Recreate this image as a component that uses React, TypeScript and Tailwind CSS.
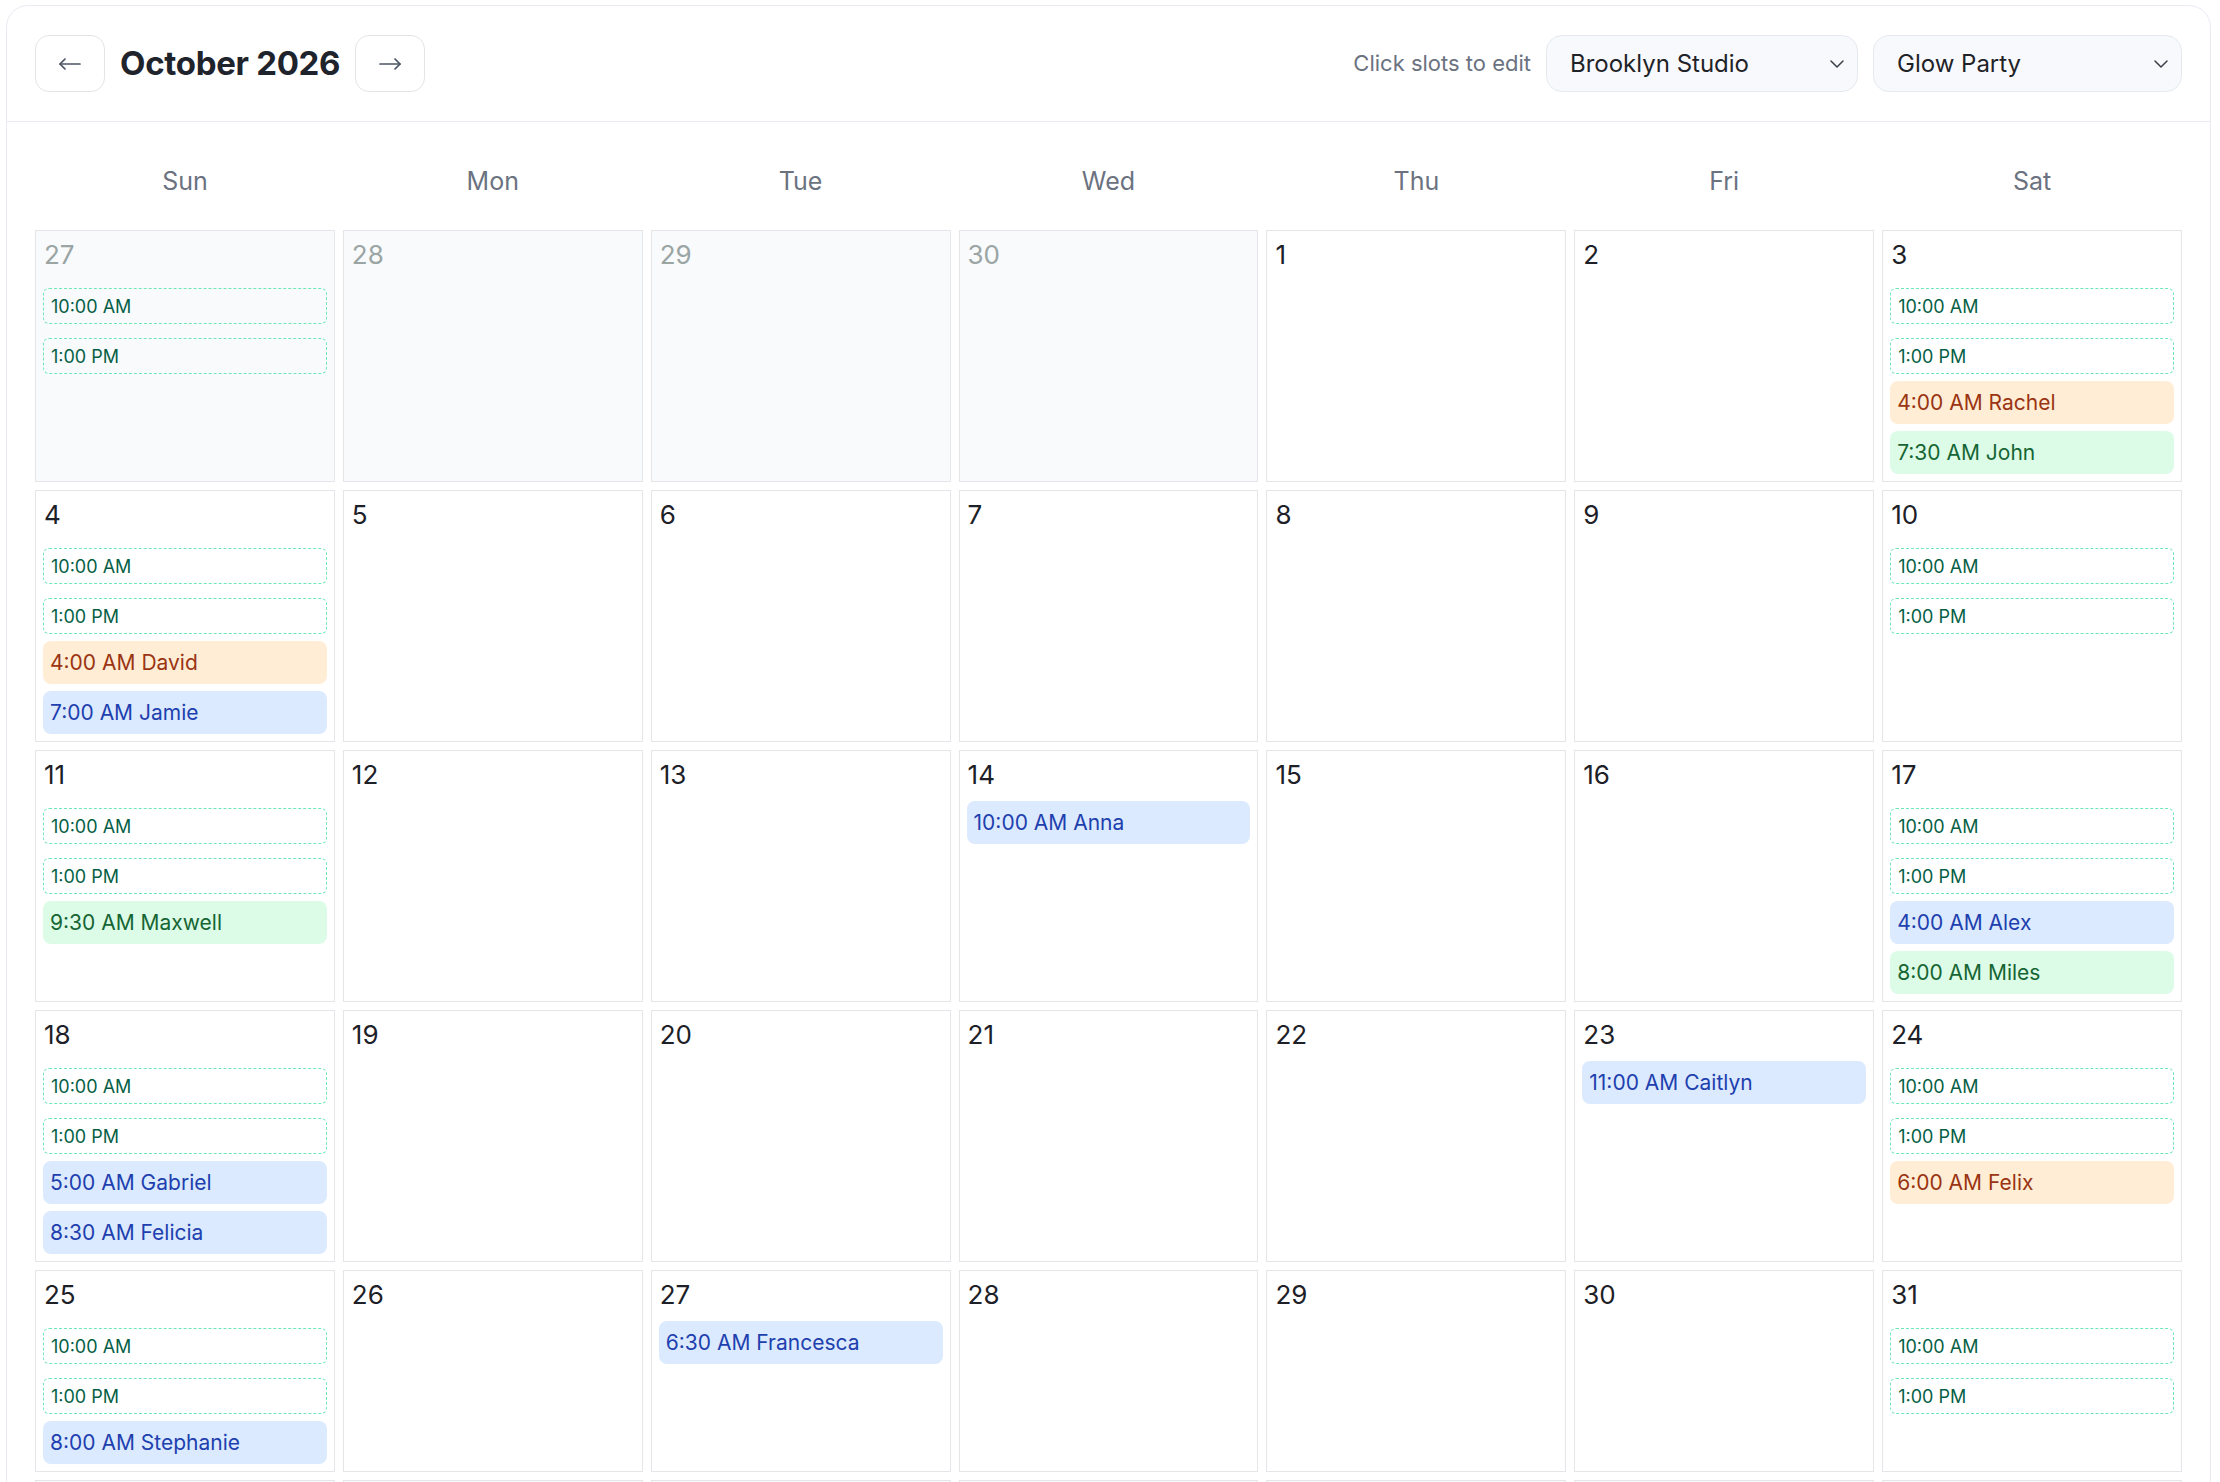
import React from "react";
import { ChevronDown } from "lucide-react";

type Booking = { time: string; name: string; tone: "orange" | "green" | "blue" };

type Day = {
  day: number;
  outside?: boolean;
  slots?: string[];
  bookings?: Booking[];
};

const toneClasses: Record<Booking["tone"], string> = {
  orange: "bg-[#ffedd5] text-[#9a3412]",
  green: "bg-[#dcfce7] text-[#166534]",
  blue: "bg-[#dbeafe] text-[#1e40af]",
};

const SLOTS = ["10:00 AM", "1:00 PM"];

// Bookings keyed by October day number
const bookings: Record<number, Booking[]> = {
  3: [
    { time: "4:00 AM", name: "Rachel", tone: "orange" },
    { time: "7:30 AM", name: "John", tone: "green" },
  ],
  4: [
    { time: "4:00 AM", name: "David", tone: "orange" },
    { time: "7:00 AM", name: "Jamie", tone: "blue" },
  ],
  11: [{ time: "9:30 AM", name: "Maxwell", tone: "green" }],
  14: [{ time: "10:00 AM", name: "Anna", tone: "blue" }],
  17: [
    { time: "4:00 AM", name: "Alex", tone: "blue" },
    { time: "8:00 AM", name: "Miles", tone: "green" },
  ],
  18: [
    { time: "5:00 AM", name: "Gabriel", tone: "blue" },
    { time: "8:30 AM", name: "Felicia", tone: "blue" },
  ],
  23: [{ time: "11:00 AM", name: "Caitlyn", tone: "blue" }],
  24: [{ time: "6:00 AM", name: "Felix", tone: "orange" }],
  25: [{ time: "8:00 AM", name: "Stephanie", tone: "blue" }],
  27: [{ time: "6:30 AM", name: "Francesca", tone: "blue" }],
};

const buildWeeks = (): Day[][] => {
  const days: Day[] = [];
  // September tail
  [27, 28, 29, 30].forEach((d, i) =>
    days.push({ day: d, outside: true, slots: i === 0 ? SLOTS : undefined })
  );
  for (let d = 1; d <= 31; d++) {
    const col = days.length % 7;
    const weekend = col === 0 || col === 6;
    days.push({ day: d, slots: weekend ? SLOTS : undefined, bookings: bookings[d] });
  }
  // November head
  for (let d = 1; d <= 7; d++) {
    const col = days.length % 7;
    const weekend = col === 0 || col === 6;
    days.push({ day: d, outside: true, slots: weekend ? SLOTS : undefined });
  }
  const weeks: Day[][] = [];
  for (let i = 0; i < days.length; i += 7) weeks.push(days.slice(i, i + 7));
  return weeks;
};

const weekdays = ["Sun", "Mon", "Tue", "Wed", "Thu", "Fri", "Sat"];

const Arrow = ({ dir }: { dir: "left" | "right" }) => (
  <svg
    width="24"
    height="14"
    viewBox="0 0 24 14"
    fill="none"
    stroke="#4b5563"
    strokeWidth="1.7"
    strokeLinecap="round"
    strokeLinejoin="round"
    className={dir === "right" ? "rotate-180" : ""}
  >
    <path d="M2 7h20" />
    <path d="M7 2 2 7l5 5" />
  </svg>
);

const Select = ({ label, width }: { label: string; width: string }) => (
  <div
    className={`${width} h-[57px] flex items-center justify-between pl-[23px] pr-[8px] rounded-[16px] border border-[#e6e9f0] bg-[#f8f9fd] text-[24px] text-[#1f2328]`}
  >
    <span>{label}</span>
    <ChevronDown className="h-[24px] w-[24px] text-[#3a3f47]" strokeWidth={1.5} />
  </div>
);

const DayCell = ({ d }: { d: Day }) => (
  <div
    className={`border border-[#e4e6ea] p-[7px] flex flex-col ${
      d.outside ? "bg-[#f8fafc]" : "bg-white"
    }`}
  >
    <div
      className={`h-[43px] text-[26px] leading-[34px] pl-px ${
        d.outside ? "text-[#9aa5a4]" : "text-[#1d2127]"
      }`}
    >
      {d.day}
    </div>
    {d.slots && (
      <div className="flex flex-col gap-[14px] py-[7px]">
        {d.slots.map((s) => (
          <div
            key={s}
            className="h-[36px] flex items-center px-[7px] rounded-[6px] border border-dashed border-[#6ee7b7] text-[18px] text-[#065f46]"
          >
            {s}
          </div>
        ))}
      </div>
    )}
    {d.bookings && (
      <div className="flex flex-col gap-[7px]">
        {d.bookings.map((b) => (
          <div
            key={b.name}
            className={`h-[43px] flex items-center px-[7px] rounded-[8px] text-[21px] ${toneClasses[b.tone]}`}
          >
            {b.time} {b.name}
          </div>
        ))}
      </div>
    )}
  </div>
);

export default function App() {
  const weeks = buildWeeks();

  return (
    <div
      className="min-h-screen bg-white pl-[6px] pr-[9px] pt-[5px]"
      style={{ fontFamily: "Inter, 'Noto Sans', sans-serif" }}
    >
      <div className="rounded-[22px] border border-[#e8ebf2] bg-white">
        {/* Header */}
        <div className="flex items-center justify-between px-[28px] py-[29px] border-b border-[#e8ebf2]">
          <div className="flex items-center gap-[15px]">
            <button className="h-[57px] w-[70px] flex items-center justify-center rounded-[14px] border border-[#e2e4e8] bg-white">
              <Arrow dir="left" />
            </button>
            <h1 className="text-[33px] font-bold tracking-[-0.3px] text-[#1f242c]">October 2026</h1>
            <button className="h-[57px] w-[70px] flex items-center justify-center rounded-[14px] border border-[#e2e4e8] bg-white">
              <Arrow dir="right" />
            </button>
          </div>
          <div className="flex items-center gap-[15px]">
            <span className="text-[22px] text-[#6b7280]">Click slots to edit</span>
            <Select label="Brooklyn Studio" width="w-[312px]" />
            <Select label="Glow Party" width="w-[309px]" />
          </div>
        </div>

        {/* Calendar body */}
        <div className="p-[28px]">
          <div className="grid grid-cols-7 gap-2 h-[64px] mb-[16px]">
            {weekdays.map((w) => (
              <div key={w} className="flex items-center justify-center text-[25px] text-[#6b7280]">
                {w}
              </div>
            ))}
          </div>
          <div className="flex flex-col gap-2">
            {weeks.map((week, wi) => (
              <div key={wi} className="grid grid-cols-7 gap-2">
                {week.map((d, di) => (
                  <DayCell key={di} d={d} />
                ))}
              </div>
            ))}
          </div>
        </div>
      </div>
    </div>
  );
}
